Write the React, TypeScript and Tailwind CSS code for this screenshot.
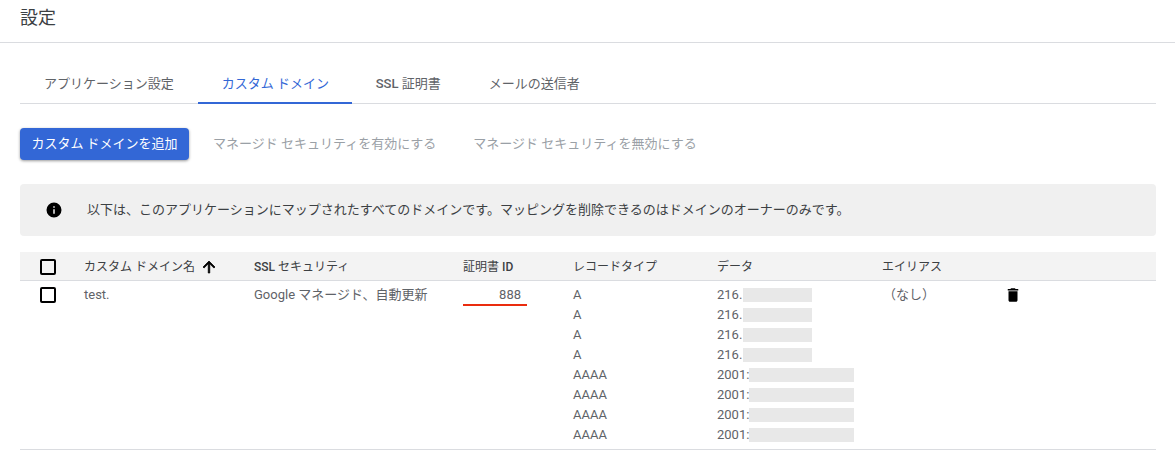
import React from "react";

const font = { fontFamily: '"Roboto","Noto Sans CJK JP",sans-serif' };

function Check() {
  return <div className="w-4 h-4 border-2 border-black rounded-[2px]" />;
}

const records = [
  ["A", "216.", "w-[69px]", "w-[26px]"],
  ["A", "216.", "w-[69px]", "w-[26px]"],
  ["A", "216.", "w-[69px]", "w-[26px]"],
  ["A", "216.", "w-[69px]", "w-[26px]"],
  ["AAAA", "2001:", "w-[105px]", "w-[32px]"],
  ["AAAA", "2001:", "w-[105px]", "w-[32px]"],
  ["AAAA", "2001:", "w-[105px]", "w-[32px]"],
  ["AAAA", "2001:", "w-[105px]", "w-[32px]"],
];

const grid = "grid grid-cols-[64px_170px_209px_110px_144px_165px_122px_1fr]";

export default function App() {
  return (
    <div style={font} className="w-[1175px] h-[461px] bg-white overflow-hidden text-[13px] text-[#5f6368]">
      <div className="h-[43px] border-b border-[#dadce0] pl-5 pt-[6px] text-[18px] leading-6 text-[#3c4043]">設定</div>

      <div className="pl-5 pr-[19px] pt-6">
        <div className="flex h-[37px] border-b border-[#dadce0] text-[13px] font-normal">
          <div className="px-6 leading-[34px] whitespace-nowrap">アプリケーション設定</div>
          <div className="px-6 leading-[34px] text-[#3367d6] border-b-2 border-[#3367d6] h-[37px] w-[154px] whitespace-nowrap">カスタム ドメイン</div>
          <div className="px-6 leading-[34px] whitespace-nowrap"><span className="font-medium">SSL</span> 証明書</div>
          <div className="px-6 leading-[34px] whitespace-nowrap">メールの送信者</div>
        </div>

        <div className="flex items-center mt-6 h-8">
          <div className="h-8 w-[169px] rounded bg-[#3367d6] text-white leading-8 text-center shadow-[0_1px_3px_rgba(0,0,0,0.4)] whitespace-nowrap">カスタム ドメインを追加</div>
          <div className="ml-6 text-[#9aa0a6]">マネージド セキュリティを有効にする</div>
          <div className="ml-[37px] text-[#9aa0a6]">マネージド セキュリティを無効にする</div>
        </div>

        <div className="mt-6 h-[52px] rounded bg-[#f0f0f0] flex items-center text-[#3c4043]">
          <svg viewBox="0 0 24 24" className="w-[18px] h-[18px] ml-[25px] fill-black">
            <path d="M12 2a10 10 0 1 0 0 20 10 10 0 0 0 0-20zm1 15h-2v-6h2v6zm0-8h-2V7h2v2z" />
          </svg>
          <div className="ml-[24px] whitespace-nowrap">以下は、このアプリケーションにマップされたすべてのドメインです。マッピングを削除できるのはドメインのオーナーのみです。</div>
        </div>

        <div className={`${grid} mt-4 h-[29px] pt-[2px] bg-[#f3f3f3] border-b border-[#dadce0] items-center text-[12px] text-[#3c4043]`}>
          <div className="pl-5"><Check /></div>
          <div className="flex items-center whitespace-nowrap">
            カスタム ドメイン名
            <svg viewBox="0 0 24 24" className="w-[18px] h-[18px] ml-[5px] fill-black">
              <path d="M4 12l1.41 1.41L11 7.83V20h2V7.83l5.58 5.59L20 12l-8-8-8 8z" stroke="black" strokeWidth="1" />
            </svg>
          </div>
          <div><span className="font-medium">SSL</span> セキュリティ</div>
          <div>証明書 <span className="font-medium">ID</span></div>
          <div>レコードタイプ</div>
          <div>データ</div>
          <div>エイリアス</div>
          <div />
        </div>

        <div className={`${grid} border-b border-[#dadce0] pt-[4px] h-[169px]`}>
          <div className="pl-5 pt-[2px]"><Check /></div>
          <div className="leading-5">test.</div>
          <div className="leading-5 whitespace-nowrap">Google マネージド、自動更新</div>
          <div className="leading-5">
            <div className="w-[64px] h-[21px] border-b-2 border-[#ea2c0e] text-right pr-[6px]">888</div>
          </div>
          <div className="leading-5">
            {records.map((r, i) => <div key={i}>{r[0]}</div>)}
          </div>
          <div className="leading-5">
            {records.map((r, i) => (
              <div key={i} className="flex items-center h-5">
                <span className={r[3]}>{r[1]}</span>
                <span className={`inline-block h-[14px] bg-[#e8e8e8] ${r[2]}`} />
              </div>
            ))}
          </div>
          <div className="leading-5 pl-[1px]">（なし）</div>
          <div className="pt-[1px]">
            <svg viewBox="0 0 24 24" className="w-[18px] h-[18px] fill-black">
              <path d="M6 19c0 1.1.9 2 2 2h8c1.1 0 2-.9 2-2V7H6v12zM19 4h-3.5l-1-1h-5l-1 1H5v2h14V4z" />
            </svg>
          </div>
        </div>
      </div>
    </div>
  );
}
